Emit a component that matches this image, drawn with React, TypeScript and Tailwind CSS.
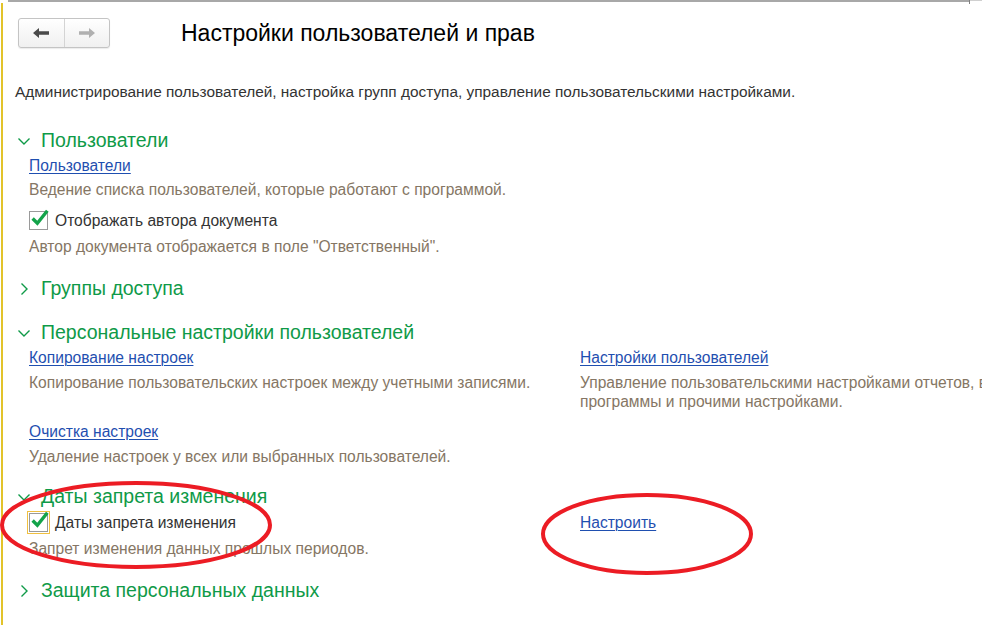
import React from 'react';

const green = 'text-[#0f9a48]';
const gray = 'text-[#857664]';
const link = 'text-[#1f4fb0] underline underline-offset-2 decoration-1';

function Chevron({ open }: { open: boolean }) {
  return (
    <svg width="14" height="14" viewBox="0 0 14 14" className="shrink-0">
      {open ? (
        <path d="M1.5 4.5 L7 10 L12.5 4.5" fill="none" stroke="#0f9a48" strokeWidth="1.4" />
      ) : (
        <path d="M4.5 1.5 L10 7 L4.5 12.5" fill="none" stroke="#0f9a48" strokeWidth="1.4" />
      )}
    </svg>
  );
}

function Header({ title, open = true, className = '' }: { title: string; open?: boolean; className?: string }) {
  return (
    <div className={`flex items-center h-[28px] pl-[17px] gap-[10px] ${className}`}>
      <Chevron open={open} />
      <span className={`text-[19.5px] ${green}`}>{title}</span>
    </div>
  );
}

function Checkbox({ label, focused = false }: { label: string; focused?: boolean }) {
  return (
    <div className="flex items-center gap-[7px]">
      <div
        className={`relative w-[19px] h-[19px] bg-white border ${
          focused ? 'border-[#9a9a9a] outline outline-1 outline-[#f0c040] outline-offset-1' : 'border-[#9a9a9a]'
        }`}
      >
        <svg width="21" height="21" viewBox="0 0 20 20" className="absolute left-[0px] -top-[5px]">
          <path d="M2.5 11 L7 15.5 L16.5 3.5" fill="none" stroke="#13a34a" strokeWidth="3.2" />
        </svg>
      </div>
      <span className="text-[#333]">{label}</span>
    </div>
  );
}

export default function App() {
  return (
    <div
      className="relative w-[982px] h-[625px] overflow-hidden bg-white text-[15.6px] text-[#333]"
      style={{ fontFamily: '"Liberation Sans", Arial, sans-serif' }}
    >
      {/* window edges */}
      <div className="absolute left-[8px] top-0 w-[962px] h-[2px] bg-[#a8a8a8]" />
      <div className="absolute left-[970px] top-0 w-[12px] h-[1px] bg-[#d0d0d0]" />
      <div className="absolute left-[969px] top-0 w-[1px] h-[4px] bg-[#808080]" />
      <div className="absolute left-[1px] top-[3px] w-[2px] h-[622px] bg-[#e2c32a]" />

      <div className="pt-[18px]">
        {/* top bar */}
        <div className="flex items-center h-[30px] pl-[18px]">
          <div className="flex h-[30px] w-[92px] rounded-[3px] border border-[#c4c4c4] bg-gradient-to-b from-white to-[#f0f0f0] shadow-[0_1px_1px_rgba(0,0,0,0.08)]">
            <div className="flex-1 flex items-center justify-center border-r border-[#d4d4d4]">
              <svg width="18" height="12" viewBox="0 0 18 12">
                <path d="M1 6 L7 1 L7 4.3 L17 4.3 L17 7.7 L7 7.7 L7 11 Z" fill="#4a4a4a" />
              </svg>
            </div>
            <div className="flex-1 flex items-center justify-center">
              <svg width="18" height="12" viewBox="0 0 18 12">
                <path d="M17 6 L11 1 L11 4.3 L1 4.3 L1 7.7 L11 7.7 L11 11 Z" fill="#b0b0b0" />
              </svg>
            </div>
          </div>
          <h1 className="ml-[71px] text-[23px] text-black">Настройки пользователей и прав</h1>
        </div>

        <div className="mt-[32px] h-[24px] flex items-center pl-[15px] text-[15.4px] text-[#333]">
          Администрирование пользователей, настройка групп доступа, управление пользовательскими настройками.
        </div>

        <Header title="Пользователи" className="mt-[23px]" />
        <div className="pl-[29px]">
          <div className="h-[22px] flex items-center">
            <span className={link}>Пользователи</span>
          </div>
          <div className={`h-[26px] flex items-center ${gray}`}>
            Ведение списка пользователей, которые работают с программой.
          </div>
          <div className="h-[36px] flex items-center">
            <Checkbox label="Отображать автора документа" />
          </div>
          <div className={`h-[16px] flex items-center ${gray}`}>
            Автор документа отображается в поле "Ответственный".
          </div>
        </div>

        <Header title="Группы доступа" open={false} className="mt-[20px]" />

        <Header title="Персональные настройки пользователей" className="mt-[16px]" />
        <div className="grid grid-cols-[551px_1fr] pl-[29px]">
          <div>
            <div className="h-[22px] flex items-center">
              <span className={link}>Копирование настроек</span>
            </div>
            <div className={`mt-[4px] leading-[19px] ${gray}`}>
              Копирование пользовательских настроек между учетными записями.
            </div>
            <div className="mt-[29px] h-[22px] flex items-center">
              <span className={link}>Очистка настроек</span>
            </div>
            <div className={`mt-[4px] leading-[19px] ${gray}`}>
              Удаление настроек у всех или выбранных пользователей.
            </div>
          </div>
          <div className="whitespace-nowrap overflow-hidden">
            <div className="h-[22px] flex items-center">
              <span className={link}>Настройки пользователей</span>
            </div>
            <div className={`mt-[4px] leading-[19px] ${gray}`}>
              Управление пользовательскими настройками отчетов, внешнего вида
              <br />
              программы и прочими настройками.
            </div>
          </div>
        </div>

        <Header title="Даты запрета изменения" className="mt-[17px]" />
        <div className="grid grid-cols-[551px_1fr] pl-[29px]">
          <div>
            <div className="h-[24px] flex items-center">
              <Checkbox label="Даты запрета изменения" focused />
            </div>
            <div className={`h-[28px] flex items-center ${gray}`}>
              Запрет изменения данных прошлых периодов.
            </div>
          </div>
          <div>
            <div className="h-[24px] flex items-center">
              <span className={link}>Настроить</span>
            </div>
          </div>
        </div>

        <Header title="Защита персональных данных" open={false} className="mt-[14px]" />
      </div>

      {/* red annotation ellipses */}
      <svg className="absolute inset-0 pointer-events-none" width="982" height="625">
        <ellipse cx="136" cy="525" rx="134" ry="42" fill="none" stroke="#ec1c24" strokeWidth="4" />
        <ellipse cx="647" cy="534" rx="104" ry="39" fill="none" stroke="#ec1c24" strokeWidth="4" />
      </svg>
    </div>
  );
}
